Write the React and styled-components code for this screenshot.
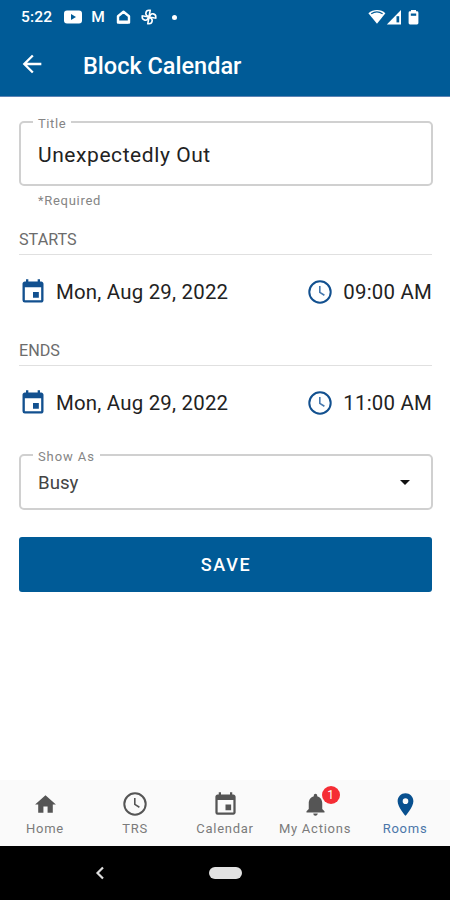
import React from 'react';
import styled, { createGlobalStyle } from 'styled-components';
import { MdArrowBack, MdEvent, MdHome, MdNotifications, MdPlace } from 'react-icons/md';

const blue = '#005b97';

const GlobalStyle = createGlobalStyle`
  * {
    box-sizing: border-box;
  }

  body {
    margin: 0;
    background-color: #fff;
    font-family: Roboto, sans-serif;
  }
`;

const Screen = styled.div`
  display: flex;
  flex-direction: column;
  width: 450px;
  height: 900px;
  overflow: hidden;
`;

const StatusBar = styled.div`
  display: flex;
  justify-content: space-between;
  align-items: center;
  height: 34px;
  padding: 0 30px 0 21px;
  background-color: ${blue};
  color: #fff;

  svg {
    display: block;
  }
`;

const Time = styled.span`
  width: 43px;
  font-size: 15.5px;
  font-weight: 500;
  letter-spacing: 0.2px;
`;

const StatusGroup = styled.div`
  display: flex;
  align-items: center;
`;

const Header = styled.header`
  display: flex;
  align-items: center;
  height: 63px;
  padding: 0 18px 2px;
  background-color: ${blue};
  border-bottom: 1px solid #5c83b4;
  color: #fff;
`;

const HeaderTitle = styled.h1`
  margin: 4px 0 0 37px;
  font-size: 23.5px;
  font-weight: 500;
  line-height: 28px;
`;

const Form = styled.main`
  flex: 1;
  padding: 18px 17px 0 19px;
`;

const Field = styled.fieldset`
  display: flex;
  justify-content: space-between;
  align-items: center;
  height: ${props => props.$height}px;
  margin: 0;
  padding: 0 20px 0 12px;
  border: 2px solid #d0d0d0;
  border-radius: 5px;
`;

const Legend = styled.legend`
  height: 14px;
  padding: 0 5px;
  color: #858585;
  font-size: 13px;
  line-height: 17px;
  letter-spacing: ${props => props.$spacing}px;
`;

const Value = styled.span`
  padding: 0 5px 4px;
  color: #222;
  font-size: 21px;
  line-height: 28px;
  letter-spacing: 0.57px;
`;

const SelectValue = styled(Value)`
  padding-bottom: 5px;
  color: #444;
  font-size: 18.7px;
  letter-spacing: 0;
`;

const Caret = styled.div`
  width: 0;
  height: 0;
  margin: 0 1px 5px 0;
  border: solid transparent;
  border-width: 5.5px 5.5px 0;
  border-top-color: #111;
`;

const Helper = styled.p`
  margin: 6px 0 19px 19px;
  color: #858585;
  font-size: 13px;
  line-height: 18px;
  letter-spacing: 0.7px;
`;

const Section = styled.section`
  padding: 0 1px 12px 0;

  & + & {
    padding-bottom: 9px;
  }
`;

const SectionTitle = styled.h2`
  height: 26px;
  margin: 0;
  border-bottom: 1px solid #e0e0e0;
  color: #6c6c6c;
  font-size: 16.2px;
  font-weight: 400;
  line-height: 22px;
`;

const DateRow = styled.div`
  display: flex;
  justify-content: space-between;
  align-items: center;
  height: 73px;
`;

const Stamp = styled.div`
  display: flex;
  align-items: center;
  gap: ${props => props.$gap}px;
  color: #222;
  font-size: 20.4px;
  letter-spacing: 0.22px;

  svg {
    color: #12508f;
  }
`;

const SaveButton = styled.button`
  display: block;
  width: 413px;
  height: 55px;
  margin: 27px 0 0;
  padding: 0 0 0 1px;
  border: 0;
  border-radius: 3px;
  background-color: ${blue};
  color: #fff;
  font-family: inherit;
  font-size: 18px;
  font-weight: 500;
  letter-spacing: 1.7px;
`;

const TabBar = styled.nav`
  display: grid;
  grid-template-columns: repeat(5, 1fr);
  height: 66px;
  background-color: #fafafa;
`;

const Tab = styled.div`
  display: flex;
  flex-direction: column;
  align-items: center;
  padding-top: 10px;
  color: ${props => (props.$active ? '#08508f' : '#555')};

  span {
    color: ${props => (props.$active ? '#4a76a9' : '#7b7b7b')};
    font-size: 13px;
    line-height: 18px;
    letter-spacing: 0.75px;
    white-space: nowrap;
  }
`;

const TabIcon = styled.div`
  position: relative;
  display: flex;
  justify-content: center;
  align-items: center;
  height: 28px;
  margin-bottom: 2px;
`;

const Badge = styled.div`
  position: absolute;
  top: -4px;
  right: -11px;
  width: 18px;
  height: 18px;
  border-radius: 50%;
  background-color: #f52d35;
  color: #fff;
  font-size: 12px;
  line-height: 18px;
  text-align: center;
`;

const SystemBar = styled.footer`
  display: grid;
  grid-template-columns: 200px 51px;
  align-items: center;
  justify-items: center;
  height: 54px;
  background-color: #000;
`;

const HomePill = styled.div`
  width: 33px;
  height: 12px;
  border-radius: 6px;
  background-color: #e2e2e2;
`;

const Clock = ({ size, hands }) => (
  <svg width={size} height={size} viewBox="0 0 24 24" fill="none" stroke="currentColor">
    <circle cx="12" cy="12" r="10.7" strokeWidth="2" />
    <path d="M11.8 6v6.4l4.6 2.8" stroke={hands} strokeWidth="1.6" />
  </svg>
);

const VideoIcon = () => (
  <svg width="18" height="14" viewBox="0 0 18 14">
    <rect y="0.5" width="18" height="13" rx="3" fill="#fff" />
    <path d="M7 4l5 3-5 3z" fill={blue} />
  </svg>
);

const HouseIcon = () => (
  <svg width="15" height="15" viewBox="0 0 15 15" fill="none" stroke="#fff">
    <path d="M2 12.5V6.2L7.5 1.8 13 6.2v6.3z" strokeWidth="2.4" strokeLinejoin="round" />
    <path d="M3 12h9" strokeWidth="3" />
  </svg>
);

const PinwheelIcon = () => (
  <svg width="16" height="16" viewBox="0 0 16 16" fill="none" stroke="#fff" strokeWidth="1.6">
    {[0, 90, 180, 270].map(angle => (
      <path key={angle} d="M8 8V1.2c-2.5 0-3.8 1.3-3.8 3.2S5.500 7.5 8 7.5" transform={`rotate(${angle + 10} 8 8)`} />
    ))}
  </svg>
);

const MailMark = styled.span`
  width: 14px;
  margin: 0 1px 0 -1px;
  font-size: 15.5px;
  font-weight: 500;
  text-align: center;
`;

const Dot = styled.i`
  width: 5px;
  height: 5px;
  margin-left: 5px;
  border-radius: 50%;
  background-color: #fff;
`;

const NoticeIcons = styled(StatusGroup)`
  gap: 10px;
`;

const SignalIcons = () => (
  <svg width="52" height="17" viewBox="0 0 52 17">
    <path d="M0.4 4.3C5.2-.1 13-.1 17.4 4.3L9 14.8z" fill="#fff" />
    <path d="M3.2 4.8c3.4-2.3 8-2.3 11.4 0" fill="none" stroke={blue} strokeWidth="1.1" />
    <path d="M33 1v14.5H18.8z" fill="#fff" />
    <path d="M28.5 7.2h2.7v6.2h-2.7z" fill={blue} />
    <path d="M43 2.3V.9h5v1.4h1q1.4 0 1.4 1.4v10.4q0 1.4-1.4 1.4h-7q-1.4 0-1.4-1.4V3.7q0-1.4 1.4-1.4z" fill="#fff" />
    <path d="M42.8 4.5h5.4v2.3h-5.4z" fill={blue} />
  </svg>
);

const DateTime = ({ title, date, time }) => (
  <Section>
    <SectionTitle>{title}</SectionTitle>
    <DateRow>
      <Stamp $gap={9}>
        <MdEvent size={28} />
        {date}
      </Stamp>
      <Stamp $gap={11}>
        <Clock size={24} hands="#4577ad" />
        {time}
      </Stamp>
    </DateRow>
  </Section>
);

const tabs = [
  { label: 'Home', icon: <MdHome size={25} /> },
  { label: 'TRS', icon: <Clock size={24} /> },
  { label: 'Calendar', icon: <MdEvent size={27} /> },
  { label: 'My Actions', icon: <MdNotifications size={27} />, count: 1 },
  { label: 'Rooms', icon: <MdPlace size={27} />, active: true },
];

const App = () => (
  <>
    <GlobalStyle />
    <Screen>
      <StatusBar>
        <StatusGroup>
          <Time>5:22</Time>
          <NoticeIcons>
            <VideoIcon />
            <MailMark>M</MailMark>
            <HouseIcon />
            <PinwheelIcon />
            <Dot />
          </NoticeIcons>
        </StatusGroup>
        <SignalIcons />
      </StatusBar>
      <Header>
        <MdArrowBack size={28} />
        <HeaderTitle>Block Calendar</HeaderTitle>
      </Header>
      <Form>
        <Field $height={71}>
          <Legend $spacing={0.6}>Title</Legend>
          <Value>Unexpectedly Out</Value>
        </Field>
        <Helper>*Required</Helper>
        <DateTime title="STARTS" date="Mon, Aug 29, 2022" time="09:00 AM" />
        <DateTime title="ENDS" date="Mon, Aug 29, 2022" time="11:00 AM" />
        <Field $height={62}>
          <Legend $spacing={0.9}>Show As</Legend>
          <SelectValue>Busy</SelectValue>
          <Caret />
        </Field>
        <SaveButton>SAVE</SaveButton>
      </Form>
      <TabBar>
        {tabs.map(({ label, icon, count, active }) => (
          <Tab key={label} $active={active}>
            <TabIcon>
              {icon}
              {count && <Badge>{count}</Badge>}
            </TabIcon>
            <span>{label}</span>
          </Tab>
        ))}
      </TabBar>
      <SystemBar>
        <svg width="10" height="14" viewBox="0 0 10 14" fill="none" stroke="#ddd" strokeWidth="2.2">
          <path d="M8 1.5L2.5 7 8 12.5" />
        </svg>
        <HomePill />
      </SystemBar>
    </Screen>
  </>
);

export default App;
